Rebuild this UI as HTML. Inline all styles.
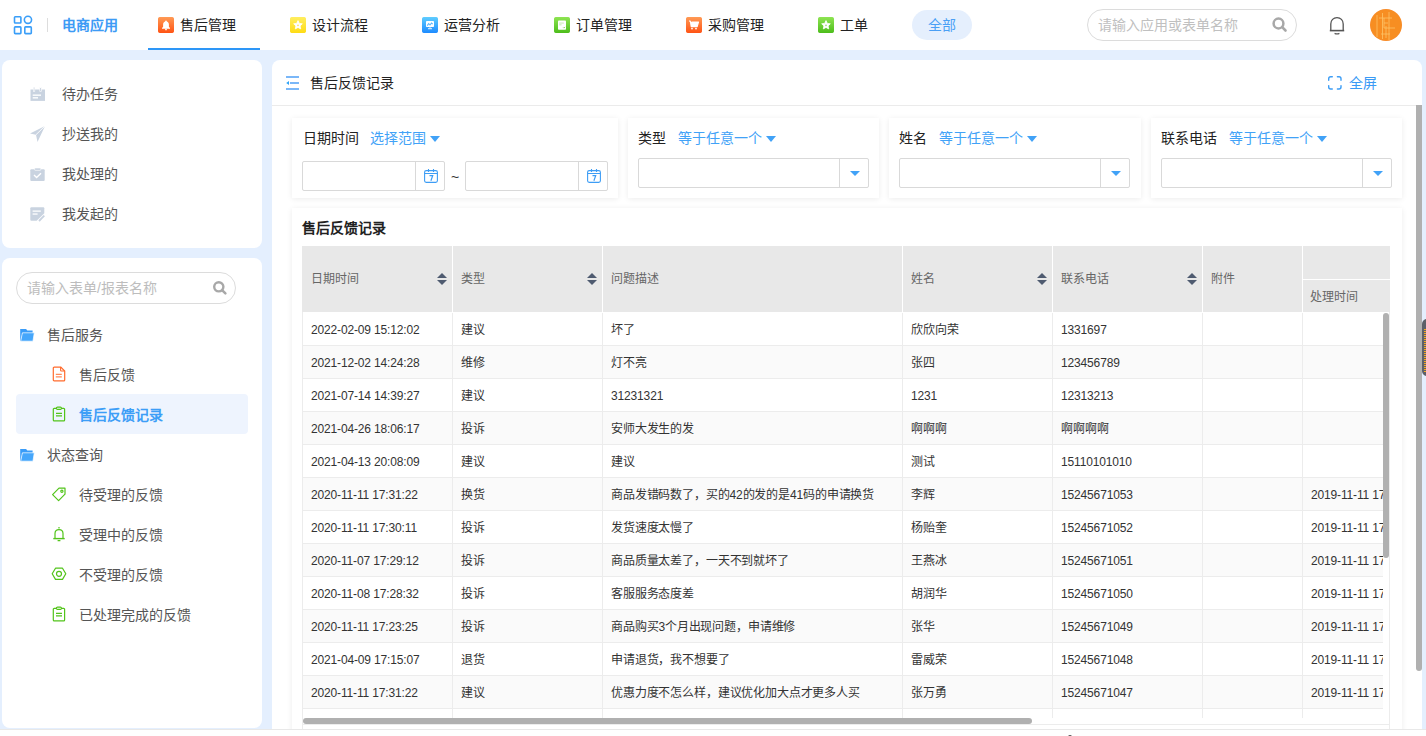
<!DOCTYPE html>
<html lang="zh-CN"><head><meta charset="utf-8">
<style>
*{box-sizing:border-box;margin:0;padding:0}
html,body{width:1426px;height:736px;overflow:hidden}
body{position:relative;background:#e4effe;font-family:"Liberation Sans",sans-serif;font-size:14px;color:#333}
.a{position:absolute}
.t{position:absolute;white-space:nowrap;line-height:20px;height:20px}
#hdr{left:0;top:0;width:1426px;height:50px;background:#fff}
.tabicon{position:absolute;width:16px;height:16px;border-radius:3px;top:17px}
.tabtxt{position:absolute;top:15px;color:#222;line-height:20px;font-size:14px}
.card{position:absolute;background:#fff;border-radius:8px}
.side1 .t{color:#555}
.fc{position:absolute;background:#fff;box-shadow:0 1px 6px rgba(0,0,0,0.08);top:118px;height:80px}
.lbl{position:absolute;top:128px;color:#222;line-height:20px}
.blu{position:absolute;top:128px;color:#41a2f7;line-height:20px}
.caret{position:absolute;width:0;height:0;border-left:5px solid transparent;border-right:5px solid transparent;border-top:6px solid #41a2f7}
.sel{position:absolute;top:158px;height:30px;border:1px solid #d9d9d9;border-radius:2px;background:#fff}
.sel .dv{position:absolute;top:0;bottom:0;width:1px;background:#d9d9d9}

.tr{position:absolute;left:0;width:1200px;height:33px;border-bottom:1px solid #ececec}
.td{position:absolute;top:0;height:32px;line-height:34px;padding-left:9px;letter-spacing:-0.15px;border-right:1px solid #ececec;white-space:nowrap;overflow:hidden;font-size:12px;color:#333}
.th{position:absolute;top:0;height:66px;line-height:67px;padding-left:9px;font-size:12px;color:#666;white-space:nowrap}
.th2{position:absolute;height:33px;line-height:37px;padding-left:8px;font-size:12px;color:#666;white-space:nowrap}
.vl{position:absolute;top:0;width:1px;height:66px;background:#fff}
.sort{position:absolute;top:27px;width:11px;height:13px}
.sort:before{content:"";position:absolute;left:0;top:0;border-left:5.5px solid transparent;border-right:5.5px solid transparent;border-bottom:5px solid #4f5b70}
.sort:after{content:"";position:absolute;left:0;top:7px;border-left:5.5px solid transparent;border-right:5.5px solid transparent;border-top:5px solid #4f5b70}
table{border-collapse:collapse;table-layout:fixed}
</style></head><body>

<!-- header -->
<div id="hdr" class="a">
  <svg class="a" style="left:13px;top:15px" width="20" height="20" viewBox="0 0 20 20" fill="none" stroke="#3a9ef8" stroke-width="1.6">
    <rect x="1.5" y="1.7" width="6.4" height="6.3" rx="0.8"/><circle cx="14.95" cy="4.8" r="3.6"/>
    <rect x="1.5" y="11.9" width="6.4" height="6.7" rx="0.8"/><rect x="11.8" y="11.9" width="6.5" height="6.7" rx="0.8"/>
  </svg>
  <div class="a" style="left:47px;top:18px;width:1px;height:14px;background:#ddd"></div>
  <div class="t" style="left:62px;top:15px;color:#3d9bf5;font-weight:bold">电商应用</div>

  <div class="a" style="left:148px;top:48px;width:112px;height:2px;background:#2d96f7"></div>
  <div class="tabicon" style="left:158px;background:linear-gradient(#ff9d5c,#ff5a1e)"></div>
  <div class="tabtxt" style="left:180px">售后管理</div>
  <div class="tabicon" style="left:290px;background:linear-gradient(#ffe45a,#ffc400)"></div>
  <div class="tabtxt" style="left:312px">设计流程</div>
  <div class="tabicon" style="left:422px;background:linear-gradient(#6cd0ff,#2e8cf6)"></div>
  <div class="tabtxt" style="left:444px">运营分析</div>
  <div class="tabicon" style="left:554px;background:linear-gradient(#94e26a,#4eb92c)"></div>
  <div class="tabtxt" style="left:576px">订单管理</div>
  <div class="tabicon" style="left:686px;background:linear-gradient(#ff9450,#f4562a)"></div>
  <div class="tabtxt" style="left:708px">采购管理</div>
  <div class="tabicon" style="left:818px;background:linear-gradient(#94e26a,#4eb92c)"></div>
  <div class="tabtxt" style="left:840px">工单</div>

  <div class="a" style="left:912px;top:10px;width:60px;height:30px;border-radius:15px;background:#e5effd"></div>
  <div class="t" style="left:928px;top:15px;color:#4a9ff5">全部</div>

  <div class="a" style="left:1087px;top:9px;width:210px;height:32px;border:1px solid #dcdcdc;border-radius:16px"></div>
  <div class="t" style="left:1098px;top:15px;color:#c0c0c0">请输入应用或表单名称</div>
  <div class="a" style="left:1336px;top:16px;width:1px;height:1px"></div>
  <div class="a" style="left:1370px;top:9px;width:32px;height:32px;border-radius:16px;background:#f88d2c"></div>
</div>

<!-- sidebar card 1 -->
<div class="card side1" style="left:2px;top:60px;width:260px;height:188px">
</div>
<div class="t" style="left:62px;top:84px;color:#555">待办任务</div>
<div class="t" style="left:62px;top:124px;color:#555">抄送我的</div>
<div class="t" style="left:62px;top:164px;color:#555">我处理的</div>
<div class="t" style="left:62px;top:204px;color:#555">我发起的</div>

<!-- sidebar card 2 -->
<div class="card" style="left:2px;top:258px;width:260px;height:470px"></div>
<div class="a" style="left:16px;top:272px;width:220px;height:32px;border:1px solid #dcdcdc;border-radius:16px"></div>
<div class="t" style="left:27px;top:278px;color:#bdbdbd">请输入表单/报表名称</div>
<div class="t" style="left:47px;top:325px;color:#555">售后服务</div>
<div class="t" style="left:79px;top:365px;color:#555">售后反馈</div>
<div class="a" style="left:16px;top:394px;width:232px;height:40px;border-radius:4px;background:#eef4fe"></div>
<div class="t" style="left:79px;top:405px;color:#3d9ef7;font-weight:bold">售后反馈记录</div>
<div class="t" style="left:47px;top:445px;color:#555">状态查询</div>
<div class="t" style="left:79px;top:485px;color:#555">待受理的反馈</div>
<div class="t" style="left:79px;top:525px;color:#555">受理中的反馈</div>
<div class="t" style="left:79px;top:565px;color:#555">不受理的反馈</div>
<div class="t" style="left:79px;top:605px;color:#555">已处理完成的反馈</div>

<!-- main card -->
<div class="card" style="left:272px;top:60px;width:1150px;height:669px;border-radius:8px 8px 0 0"></div>
<div class="a" style="left:272px;top:105px;width:1150px;height:1px;background:#ebebeb"></div>
<div class="t" style="left:310px;top:73px;color:#222">售后反馈记录</div>
<div class="t" style="left:1349px;top:73px;color:#3a9af5">全屏</div>

<!-- filter cards -->
<div class="fc" style="left:292px;width:326px"></div>
<div class="fc" style="left:628px;width:251px"></div>
<div class="fc" style="left:889px;width:252px"></div>
<div class="fc" style="left:1151px;width:251px"></div>

<div class="lbl" style="left:303px">日期时间</div>
<div class="blu" style="left:370px">选择范围</div>
<div class="caret" style="left:430px;top:136px"></div>
<div class="lbl" style="left:638px">类型</div>
<div class="blu" style="left:678px">等于任意一个</div>
<div class="caret" style="left:766px;top:136px"></div>
<div class="lbl" style="left:899px">姓名</div>
<div class="blu" style="left:939px">等于任意一个</div>
<div class="caret" style="left:1027px;top:136px"></div>
<div class="lbl" style="left:1161px">联系电话</div>
<div class="blu" style="left:1229px">等于任意一个</div>
<div class="caret" style="left:1317px;top:136px"></div>

<div class="sel" style="left:302px;top:161px;width:143px"><div class="dv" style="left:112px"></div></div>
<div class="t" style="left:451px;top:167px;color:#333">~</div>
<div class="sel" style="left:465px;top:161px;width:143px"><div class="dv" style="left:112px"></div></div>
<div class="sel" style="left:638px;width:231px"><div class="dv" style="left:200px"></div></div>
<div class="sel" style="left:899px;width:231px"><div class="dv" style="left:200px"></div></div>
<div class="sel" style="left:1161px;width:231px"><div class="dv" style="left:200px"></div></div>

<!-- table card -->
<div class="fc" style="left:292px;top:208px;width:1110px;height:530px"></div>
<div class="t" style="left:302px;top:218px;color:#222;font-weight:bold">售后反馈记录</div>

<div class="a" id="thead" style="left:302px;top:246px;width:1088px;height:66px;background:#e8e8e8;overflow:hidden">
<div class="th" style="left:0px;width:150px">日期时间</div>
<div class="sort" style="left:135px"></div>
<div class="vl" style="left:150px"></div>
<div class="th" style="left:150px;width:150px">类型</div>
<div class="sort" style="left:285px"></div>
<div class="vl" style="left:300px"></div>
<div class="th" style="left:300px;width:300px">问题描述</div>
<div class="vl" style="left:600px"></div>
<div class="th" style="left:600px;width:150px">姓名</div>
<div class="sort" style="left:735px"></div>
<div class="vl" style="left:750px"></div>
<div class="th" style="left:750px;width:150px">联系电话</div>
<div class="sort" style="left:885px"></div>
<div class="vl" style="left:900px"></div>
<div class="th" style="left:900px;width:100px">附件</div>
<div class="vl" style="left:1000px"></div>
<div class="a" style="left:1001px;top:33px;width:200px;height:1px;background:#fff"></div>
<div class="th2" style="left:1000px;top:33px">处理时间</div>
</div>
<div class="a" id="tbody" style="left:302px;top:313px;width:1081px;height:405px;overflow:hidden">
<div class="tr" style="top:0px;background:#fff">
<div class="td" style="left:0px;width:151px">2022-02-09 15:12:02</div>
<div class="td" style="left:150px;width:151px">建议</div>
<div class="td" style="left:300px;width:301px">坏了</div>
<div class="td" style="left:600px;width:151px">欣欣向荣</div>
<div class="td" style="left:750px;width:151px">1331697</div>
<div class="td" style="left:900px;width:101px"></div>
<div class="td" style="left:1000px;width:201px"></div>
</div>
<div class="tr" style="top:33px;background:#fafafa">
<div class="td" style="left:0px;width:151px">2021-12-02 14:24:28</div>
<div class="td" style="left:150px;width:151px">维修</div>
<div class="td" style="left:300px;width:301px">灯不亮</div>
<div class="td" style="left:600px;width:151px">张四</div>
<div class="td" style="left:750px;width:151px">123456789</div>
<div class="td" style="left:900px;width:101px"></div>
<div class="td" style="left:1000px;width:201px"></div>
</div>
<div class="tr" style="top:66px;background:#fff">
<div class="td" style="left:0px;width:151px">2021-07-14 14:39:27</div>
<div class="td" style="left:150px;width:151px">建议</div>
<div class="td" style="left:300px;width:301px">31231321</div>
<div class="td" style="left:600px;width:151px">1231</div>
<div class="td" style="left:750px;width:151px">12313213</div>
<div class="td" style="left:900px;width:101px"></div>
<div class="td" style="left:1000px;width:201px"></div>
</div>
<div class="tr" style="top:99px;background:#fafafa">
<div class="td" style="left:0px;width:151px">2021-04-26 18:06:17</div>
<div class="td" style="left:150px;width:151px">投诉</div>
<div class="td" style="left:300px;width:301px">安师大发生的发</div>
<div class="td" style="left:600px;width:151px">啊啊啊</div>
<div class="td" style="left:750px;width:151px">啊啊啊啊</div>
<div class="td" style="left:900px;width:101px"></div>
<div class="td" style="left:1000px;width:201px"></div>
</div>
<div class="tr" style="top:132px;background:#fff">
<div class="td" style="left:0px;width:151px">2021-04-13 20:08:09</div>
<div class="td" style="left:150px;width:151px">建议</div>
<div class="td" style="left:300px;width:301px">建议</div>
<div class="td" style="left:600px;width:151px">测试</div>
<div class="td" style="left:750px;width:151px">15110101010</div>
<div class="td" style="left:900px;width:101px"></div>
<div class="td" style="left:1000px;width:201px"></div>
</div>
<div class="tr" style="top:165px;background:#fafafa">
<div class="td" style="left:0px;width:151px">2020-11-11 17:31:22</div>
<div class="td" style="left:150px;width:151px">换货</div>
<div class="td" style="left:300px;width:301px">商品发错码数了，买的42的发的是41码的申请换货</div>
<div class="td" style="left:600px;width:151px">李辉</div>
<div class="td" style="left:750px;width:151px">15245671053</div>
<div class="td" style="left:900px;width:101px"></div>
<div class="td" style="left:1000px;width:201px">2019-11-11 17:31:22</div>
</div>
<div class="tr" style="top:198px;background:#fff">
<div class="td" style="left:0px;width:151px">2020-11-11 17:30:11</div>
<div class="td" style="left:150px;width:151px">投诉</div>
<div class="td" style="left:300px;width:301px">发货速度太慢了</div>
<div class="td" style="left:600px;width:151px">杨贻奎</div>
<div class="td" style="left:750px;width:151px">15245671052</div>
<div class="td" style="left:900px;width:101px"></div>
<div class="td" style="left:1000px;width:201px">2019-11-11 17:31:22</div>
</div>
<div class="tr" style="top:231px;background:#fafafa">
<div class="td" style="left:0px;width:151px">2020-11-07 17:29:12</div>
<div class="td" style="left:150px;width:151px">投诉</div>
<div class="td" style="left:300px;width:301px">商品质量太差了，一天不到就坏了</div>
<div class="td" style="left:600px;width:151px">王燕冰</div>
<div class="td" style="left:750px;width:151px">15245671051</div>
<div class="td" style="left:900px;width:101px"></div>
<div class="td" style="left:1000px;width:201px">2019-11-11 17:31:22</div>
</div>
<div class="tr" style="top:264px;background:#fff">
<div class="td" style="left:0px;width:151px">2020-11-08 17:28:32</div>
<div class="td" style="left:150px;width:151px">投诉</div>
<div class="td" style="left:300px;width:301px">客服服务态度差</div>
<div class="td" style="left:600px;width:151px">胡润华</div>
<div class="td" style="left:750px;width:151px">15245671050</div>
<div class="td" style="left:900px;width:101px"></div>
<div class="td" style="left:1000px;width:201px">2019-11-11 17:31:22</div>
</div>
<div class="tr" style="top:297px;background:#fafafa">
<div class="td" style="left:0px;width:151px">2020-11-11 17:23:25</div>
<div class="td" style="left:150px;width:151px">投诉</div>
<div class="td" style="left:300px;width:301px">商品购买3个月出现问题，申请维修</div>
<div class="td" style="left:600px;width:151px">张华</div>
<div class="td" style="left:750px;width:151px">15245671049</div>
<div class="td" style="left:900px;width:101px"></div>
<div class="td" style="left:1000px;width:201px">2019-11-11 17:31:22</div>
</div>
<div class="tr" style="top:330px;background:#fff">
<div class="td" style="left:0px;width:151px">2021-04-09 17:15:07</div>
<div class="td" style="left:150px;width:151px">退货</div>
<div class="td" style="left:300px;width:301px">申请退货，我不想要了</div>
<div class="td" style="left:600px;width:151px">雷威荣</div>
<div class="td" style="left:750px;width:151px">15245671048</div>
<div class="td" style="left:900px;width:101px"></div>
<div class="td" style="left:1000px;width:201px">2019-11-11 17:31:22</div>
</div>
<div class="tr" style="top:363px;background:#fafafa">
<div class="td" style="left:0px;width:151px">2020-11-11 17:31:22</div>
<div class="td" style="left:150px;width:151px">建议</div>
<div class="td" style="left:300px;width:301px">优惠力度不怎么样，建议优化加大点才更多人买</div>
<div class="td" style="left:600px;width:151px">张万勇</div>
<div class="td" style="left:750px;width:151px">15245671047</div>
<div class="td" style="left:900px;width:101px"></div>
<div class="td" style="left:1000px;width:201px">2019-11-11 17:31:22</div>
</div>
<div class="tr" style="top:396px;background:#fff">
<div class="td" style="left:0px;width:151px"></div>
<div class="td" style="left:150px;width:151px"></div>
<div class="td" style="left:300px;width:301px"></div>
<div class="td" style="left:600px;width:151px"></div>
<div class="td" style="left:750px;width:151px"></div>
<div class="td" style="left:900px;width:101px"></div>
<div class="td" style="left:1000px;width:201px"></div>
</div>
</div>

<!-- header tab glyphs -->
<svg class="a" style="left:158px;top:17px" width="16" height="16" viewBox="0 0 16 16">
 <defs><linearGradient id="go" x1="0" y1="0" x2="0" y2="1"><stop offset="0" stop-color="#ff9a55"/><stop offset="1" stop-color="#ff5314"/></linearGradient>
 <linearGradient id="gy" x1="0" y1="0" x2="0" y2="1"><stop offset="0" stop-color="#ffee60"/><stop offset="1" stop-color="#ffdc14"/></linearGradient>
 <linearGradient id="gb" x1="0" y1="0" x2="0" y2="1"><stop offset="0" stop-color="#5fcdff"/><stop offset="1" stop-color="#1d8bff"/></linearGradient>
 <linearGradient id="gg" x1="0" y1="0" x2="0" y2="1"><stop offset="0" stop-color="#8ee452"/><stop offset="1" stop-color="#4dbd1b"/></linearGradient></defs>
 <rect width="16" height="16" rx="2.2" fill="url(#go)"/>
 <path d="M8 3.6c.5 0 .8.4.9.8 1.4.4 2 1.6 2 3.1v2.3l1.1 1.3v.6H4v-.6l1.1-1.3V7.5c0-1.5.6-2.7 2-3.1.1-.4.4-.8.9-.8z" fill="#fff"/>
 <circle cx="8" cy="12.4" r="0.9" fill="#fff"/>
</svg>
<svg class="a" style="left:290px;top:17px" width="16" height="16" viewBox="0 0 16 16">
 <rect width="16" height="16" rx="2.2" fill="url(#gy)"/>
 <path d="M8 3.6l1.3 2.8 3 .4-2.2 2.1.6 3L8 10.4l-2.7 1.5.6-3-2.2-2.1 3-.4z" fill="#fff" stroke="#fff" stroke-width="0.8" stroke-linejoin="round"/>
 <circle cx="8" cy="8.3" r="0.9" fill="#ffe25a"/>
</svg>
<svg class="a" style="left:422px;top:17px" width="16" height="16" viewBox="0 0 16 16">
 <rect width="16" height="16" rx="2.2" fill="url(#gb)"/>
 <rect x="4" y="4" width="8" height="6" rx="0.8" fill="#fff"/>
 <path d="M5.2 8.6l1.5-2 1.3 1.4 1.5-1.9 1.3 1" fill="none" stroke="#5ab8ff" stroke-width="1.1"/>
 <rect x="7.5" y="10" width="1" height="1.3" fill="#fff" opacity="0.7"/>
 <rect x="6" y="11.3" width="4" height="0.9" fill="#fff"/>
</svg>
<svg class="a" style="left:554px;top:17px" width="16" height="16" viewBox="0 0 16 16">
 <rect width="16" height="16" rx="2.2" fill="url(#gg)"/>
 <rect x="4" y="3.6" width="8" height="9.2" rx="0.8" fill="#fff"/>
 <rect x="5.2" y="5.6" width="4.6" height="0.9" fill="#bfe8a8"/>
 <rect x="5.2" y="7.4" width="2.4" height="0.9" fill="#bfe8a8"/>
 <path d="M9.2 10.4l.7.7 1.2-1.2" fill="none" stroke="#7ccf4a" stroke-width="0.8"/>
</svg>
<svg class="a" style="left:686px;top:17px" width="16" height="16" viewBox="0 0 16 16">
 <rect width="16" height="16" rx="2.2" fill="url(#go)"/>
 <path d="M3 4h1.3l.9 5.6h6l1.3-4.6H5.4" fill="#fff" stroke="#fff" stroke-width="1.1" stroke-linejoin="round"/>
 <path d="M5.2 5.2h6.8l-1 4.2H5.6z" fill="#fff"/>
 <circle cx="6" cy="11.6" r="0.9" fill="#fff"/><circle cx="10" cy="11.6" r="0.9" fill="#fff"/>
</svg>
<svg class="a" style="left:818px;top:17px" width="16" height="16" viewBox="0 0 16 16">
 <rect width="16" height="16" rx="2.2" fill="url(#gg)"/>
 <path d="M8 3.6l1.3 2.8 3 .4-2.2 2.1.6 3L8 10.4l-2.7 1.5.6-3-2.2-2.1 3-.4z" fill="#fff" stroke="#fff" stroke-width="0.8" stroke-linejoin="round"/>
 <circle cx="8" cy="8.3" r="0.9" fill="#9be07a"/>
</svg>

<!-- header right icons -->
<svg class="a" style="left:1270px;top:15px" width="20" height="20" viewBox="0 0 20 20">
 <circle cx="8.5" cy="8.5" r="4.9" fill="none" stroke="#a8a8a8" stroke-width="2.5"/>
 <path d="M12.2 12.2l3.3 3.3" stroke="#a8a8a8" stroke-width="2.6" stroke-linecap="round"/>
</svg>
<svg class="a" style="left:1326px;top:14px" width="22" height="22" viewBox="0 0 22 22">
 <path d="M4.8 16.4V10c0-3.7 2.6-6.4 6.2-6.4s6.2 2.7 6.2 6.4v6.4" fill="none" stroke="#555" stroke-width="1.3"/>
 <path d="M3.8 16.6h14.4" stroke="#555" stroke-width="1.6"/>
 <path d="M8.6 19.3q2.4 1.2 4.8 0" fill="none" stroke="#555" stroke-width="1.3"/>
</svg>
<svg class="a" style="left:1370px;top:9px" width="32" height="32" viewBox="0 0 32 32">
 <circle cx="16" cy="16" r="15.2" fill="#f78e22"/>
 <g stroke="#ffd27a" stroke-width="0.8" opacity="0.8">
  <path d="M7 6v22M12.5 4v26M19 3v28M14 9v10M16 17v12M9 9h13M14 19h11M11 25h9M14 14h4"/>
 </g>
</svg>

<!-- main header icons -->
<svg class="a" style="left:284px;top:74px" width="18" height="18" viewBox="0 0 18 18">
 <rect x="2" y="2" width="13" height="2" fill="#7ab7f8"/>
 <rect x="6" y="8" width="9" height="2" fill="#7ab7f8"/>
 <rect x="2" y="14" width="13" height="2" fill="#7ab7f8"/>
 <path d="M5 7v4L2.2 9z" fill="#2ea3f7"/>
</svg>
<svg class="a" style="left:1327px;top:75px" width="16" height="16" viewBox="0 0 16 16" fill="none" stroke="#3d9df5" stroke-width="1.4" stroke-linecap="round">
 <path d="M1.7 5.2V3.8q0-2 2-2h1.6M10.4 1.8h1.6q2 0 2 2v1.4M14 10.6V12q0 2-2 2h-1.6M5.3 14H3.7q-2 0-2-2v-1.4"/>
</svg>

<!-- calendar icons -->
<svg class="a" style="left:423px;top:168px" width="16" height="16" viewBox="0 0 16 16" fill="none" stroke="#3d9df5" stroke-width="1.1">
 <rect x="1.6" y="2.6" width="12.8" height="11.8" rx="1.6"/>
 <path d="M1.6 5.5h12.8M5.5 1v3M10.5 1v3"/>
 <path d="M6.5 7.7h3.2l-1.8 5" stroke-width="1.2"/>
</svg>
<svg class="a" style="left:586px;top:168px" width="16" height="16" viewBox="0 0 16 16" fill="none" stroke="#3d9df5" stroke-width="1.1">
 <rect x="1.6" y="2.6" width="12.8" height="11.8" rx="1.6"/>
 <path d="M1.6 5.5h12.8M5.5 1v3M10.5 1v3"/>
 <path d="M6.5 7.7h3.2l-1.8 5" stroke-width="1.2"/>
</svg>
<!-- select carets -->
<div class="caret" style="left:850px;top:171px;border-left-width:5px;border-right-width:5px;border-top-width:5px"></div>
<div class="caret" style="left:1111px;top:171px;border-left-width:5px;border-right-width:5px;border-top-width:5px"></div>
<div class="caret" style="left:1373px;top:171px;border-left-width:5px;border-right-width:5px;border-top-width:5px"></div>

<!-- sidebar card1 icons -->
<svg class="a" style="left:30px;top:86px" width="16" height="16" viewBox="0 0 16 16">
 <path d="M0.5 3.5h14.5v11.4H0.5z" fill="#c9d3e0"/>
 <rect x="3.3" y="1" width="1.5" height="4.5" fill="#c9d3e0" stroke="#fff" stroke-width="0.6"/>
 <rect x="9.8" y="1" width="1.5" height="4.5" fill="#c9d3e0" stroke="#fff" stroke-width="0.6"/>
 <rect x="2.7" y="8.4" width="8.3" height="1.6" fill="#fff" opacity="0.85"/>
 <rect x="2.7" y="11" width="5.3" height="1.6" fill="#fff" opacity="0.85"/>
</svg>
<svg class="a" style="left:29px;top:125px" width="17" height="18" viewBox="0 0 17 18">
 <path d="M16 1L1 8.5l6 1.2L8.5 17z" fill="#c9d3e0"/>
 <path d="M16 1L7 9.7" stroke="#fff" stroke-width="0.9"/>
</svg>
<svg class="a" style="left:30px;top:167px" width="16" height="16" viewBox="0 0 16 16">
 <rect x="0.3" y="2.2" width="14.4" height="11.9" rx="1" fill="#c9d3e0"/>
 <rect x="4.7" y="1" width="6" height="2.4" rx="0.6" fill="#c9d3e0" stroke="#fff" stroke-width="0.6"/>
 <path d="M4 8l2.6 2.6 4.4-4.4" fill="none" stroke="#fff" stroke-width="1.4"/>
</svg>
<svg class="a" style="left:30px;top:206px" width="16" height="16" viewBox="0 0 16 16">
 <path d="M1.3 1.2h12q1 0 1 1v5l-7.6 7.6H1.3q-1 0-1-1V2.2q0-1 1-1z" fill="#c9d3e0"/>
 <rect x="2.6" y="4.4" width="8.2" height="1.5" fill="#fff" opacity="0.85"/>
 <rect x="2.6" y="7.3" width="5" height="1.5" fill="#fff" opacity="0.85"/>
 <path d="M9 15l5.3-5.3" stroke="#c9d3e0" stroke-width="1.8"/>
</svg>

<!-- sidebar card2 icons -->
<svg class="a" style="left:174px;top:0px;display:none" width="1" height="1"></svg>
<svg class="a" style="left:212px;top:280px" width="16" height="16" viewBox="0 0 16 16">
 <circle cx="6.8" cy="6.8" r="4.6" fill="none" stroke="#a8a8a8" stroke-width="2.4"/>
 <path d="M10.3 10.3l3.1 3.1" stroke="#a8a8a8" stroke-width="2.5" stroke-linecap="round"/>
</svg>
<svg class="a" style="left:20px;top:328px" width="16" height="15" viewBox="0 0 16 15">
 <path d="M0.2 0.9h5.9l1.2 1.6h5.3v2.5H2.4L0.9 13H0.2z" fill="#3a9cf8"/>
 <path d="M2.4 4.8h11.9L12.95 13.2H0.7z" fill="#45a6fb" stroke="#fff" stroke-width="0.7"/>
</svg>
<svg class="a" style="left:20px;top:448px" width="16" height="15" viewBox="0 0 16 15">
 <path d="M0.2 0.9h5.9l1.2 1.6h5.3v2.5H2.4L0.9 13H0.2z" fill="#3a9cf8"/>
 <path d="M2.4 4.8h11.9L12.95 13.2H0.7z" fill="#45a6fb" stroke="#fff" stroke-width="0.7"/>
</svg>
<svg class="a" style="left:52px;top:366px" width="14" height="16" viewBox="0 0 14 16" fill="none">
 <path d="M2.2 1.1h6.6l3.9 3.9v9q0 .9-.9.9H2.2q-.9 0-.9-.9V2q0-.9.9-.9z" stroke="#ff6b2c" stroke-width="1.2"/>
 <path d="M8.6 1.1v3.2q0 .7.7.7h3.4" stroke="#ff6b2c" stroke-width="1.1"/>
 <path d="M3.8 8.3h6M3.8 10.9h6" stroke="#ff8a5a" stroke-width="1.2"/>
</svg>
<svg class="a" style="left:52px;top:406px" width="14" height="16" viewBox="0 0 14 16" fill="none" stroke="#52c41a">
 <path d="M4.3 2.4H2.2q-.9 0-.9.9v10.7q0 .9.9.9h9.5q.9 0 .9-.9V3.3q0-.9-.9-.9H9.6" stroke-width="1.2"/>
 <rect x="4.4" y="1.1" width="5.1" height="2.3" rx="1.1" stroke-width="1.1"/>
 <path d="M4 7.4h6M4 9.9h6" stroke-width="1.2"/>
</svg>
<svg class="a" style="left:51px;top:486px" width="16" height="16" viewBox="0 0 16 16" fill="none" stroke="#52c41a" stroke-width="1.2" stroke-linejoin="round">
 <path d="M8 2.2h6v6l-6.4 6.4-6-6z"/>
 <circle cx="10.9" cy="5.3" r="1.1"/>
</svg>
<svg class="a" style="left:51px;top:526px" width="16" height="16" viewBox="0 0 16 16" fill="none" stroke="#52c41a" stroke-width="1.2">
 <path d="M4 12.3V7.6q0-4 4-4t4 4v4.7"/>
 <path d="M2.3 12.6h11.4" stroke-width="1.4"/>
 <path d="M8 1v1.6M6.6 14.6h2.8"/>
</svg>
<svg class="a" style="left:51px;top:566px" width="16" height="16" viewBox="0 0 16 16" fill="none" stroke="#52c41a" stroke-width="1.2" stroke-linejoin="round">
 <path d="M4.5 2.2h7l3.3 5.6-3.3 5.6h-7L1.2 7.8z"/>
 <circle cx="8" cy="7.8" r="2.5"/>
</svg>
<svg class="a" style="left:52px;top:606px" width="14" height="16" viewBox="0 0 14 16" fill="none" stroke="#52c41a">
 <path d="M4.3 2.4H2.2q-.9 0-.9.9v10.7q0 .9.9.9h9.5q.9 0 .9-.9V3.3q0-.9-.9-.9H9.6" stroke-width="1.2"/>
 <rect x="4.4" y="1.1" width="5.1" height="2.3" rx="1.1" stroke-width="1.1"/>
 <path d="M4 7.4h6M4 9.9h6" stroke-width="1.2"/>
</svg>

<!-- scrollbars -->
<div class="a" style="left:1383px;top:313px;width:6px;height:245px;border-radius:3px;background:#b0b0b0"></div>
<div class="a" style="left:1416px;top:105px;width:6px;height:566px;border-radius:0 0 3px 3px;background:#b0b0b0"></div>
<div class="a" style="left:303px;top:718px;width:729px;height:6px;border-radius:3px;background:#b0b0b0"></div>
<div class="a" style="left:1422px;top:319px;width:6px;height:57px;border-radius:5px 0 0 5px;background:#5c6068;overflow:hidden">
 <div style="position:absolute;left:1.5px;top:10px;width:8px;height:44px;background:repeating-linear-gradient(#f5a623 0 1px,#5c6068 1px 2px)"></div>
</div>
<!-- bottom strip -->
<div class="a" style="left:0;top:729px;width:1426px;height:1px;background:#e8e8e8"></div>
<div class="a" style="left:0;top:730px;width:1426px;height:6px;background:#fefefe"></div>
<div class="a" style="left:302px;top:312px;width:1px;height:417px;background:#ececec"></div>
<div class="a" style="left:1389px;top:312px;width:1px;height:417px;background:#ececec"></div>
<div class="a" style="left:302px;top:724px;width:1088px;height:1px;background:#ececec"></div>

<div class="a" style="left:1068px;top:735px;width:4px;height:3px;border-radius:2px 2px 0 0;background:#555"></div>
</body></html>
